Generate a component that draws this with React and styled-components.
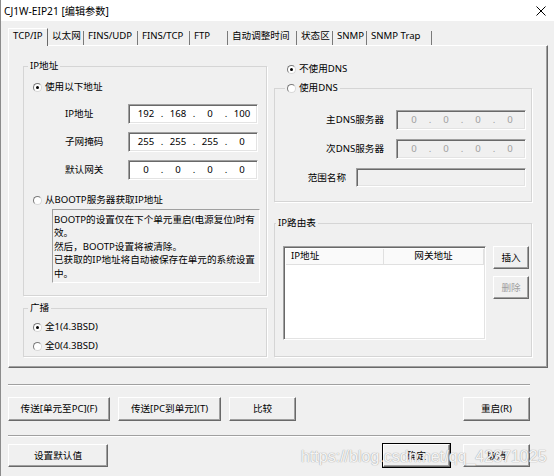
import React from 'react'
import styled, { createGlobalStyle, css } from 'styled-components'

const GlobalStyle = createGlobalStyle`
  html, body {
    margin: 0;
    padding: 0;
    background: #f0f0f0;
  }
  body {
    font-family: "Noto Sans", "Noto Sans CJK SC", sans-serif;
    font-size: 9.6px;
    line-height: 14px;
    color: #000;
  }
`

const sunken = css`
  box-sizing: border-box;
  border: 1px solid;
  border-color: #a0a0a0 #fff #fff #a0a0a0;
  box-shadow: inset 1px 1px 0 #696969, inset -1px -1px 0 #e3e3e3;
`

const Window = styled.div`
  position: relative;
  width: 554px;
  height: 476px;
  box-sizing: border-box;
  border-left: 1px solid #8c8c8c;
  background: #f0f0f0;
  overflow: hidden;
`

const TitleBar = styled.div`
  height: 21px;
  background: #fff;
  display: flex;
  align-items: center;
  justify-content: space-between;
  padding: 0 8px 0 3px;
  font-size: 10.2px;
`

const Body = styled.div`
  padding: 7px 6px 0 7px;
`

const TabStrip = styled.div`
  display: flex;
  align-items: flex-start;
  height: 17px;
  position: relative;
  z-index: 2;
`

const Tab = styled.div`
  box-sizing: border-box;
  width: ${p => p.$w}px;
  height: 17px;
  padding: 1px 0 0 4px;
  white-space: nowrap;
  ${p => p.$active ? css`
    height: 18px;
    padding-top: 0;
    background: #f0f0f0;
    border-top: 1px solid #fff;
    border-left: 1px solid #fff;
    border-right: 1px solid #696969;
  ` : css`
    background: linear-gradient(#7a7a7a, #7a7a7a) right bottom / 1px 14px no-repeat;
  `}
`

const Panel = styled.div`
  box-sizing: border-box;
  width: 540px;
  height: 323px;
  border: 1px solid;
  border-color: #fff #696969 #696969 #fff;
  box-shadow: inset -1px -1px 0 #a0a0a0;
  padding: 13px 14px 0 14px;
  display: grid;
  grid-template-columns: 244px 258px;
  column-gap: 7px;
  align-items: start;
`

const Column = styled.div`
  display: flex;
  flex-direction: column;
  padding-top: ${p => p.$top || 0}px;
`

const Group = styled.fieldset`
  box-sizing: border-box;
  margin: ${p => p.$mt || 0}px 0 0 0;
  padding: 0;
  min-width: 0;
  height: ${p => p.$h}px;
  border: 1px solid #d5d5d5;
  box-shadow: 1px 1px 0 #fff;
`

const Legend = styled.legend`
  margin-left: ${p => p.$ml}px;
  padding: 0 2px;
  line-height: 14px;
  display: flex;
  align-items: center;
  gap: 3px;
`

const GroupBody = styled.div`
  padding: ${p => p.$pad};
  display: flex;
  flex-direction: ${p => p.$row ? 'row' : 'column'};
  gap: ${p => p.$gap || 0}px;
`

const RadioRow = styled.div`
  display: flex;
  align-items: center;
  gap: 3px;
  height: 14px;
  margin: ${p => p.$m || '0'};
`

const RadioDot = styled.span`
  box-sizing: border-box;
  width: 9px;
  height: 9px;
  border-radius: 50%;
  border: 1px solid;
  border-color: #7a7a7a #d8d8d8 #d8d8d8 #7a7a7a;
  background: #fff;
  display: inline-flex;
  align-items: center;
  justify-content: center;
  flex: none;

  &::after {
    content: '';
    width: 3px;
    height: 3px;
    border-radius: 50%;
    background: #000;
    display: ${p => p.$checked ? 'block' : 'none'};
  }
`

const AddrList = styled.div`
  display: flex;
  flex-direction: column;
  gap: 8px;
  margin-top: 10px;
`

const AddrRow = styled.div`
  display: flex;
  align-items: center;
`

const AddrLabel = styled.span`
  width: 63px;
  margin-left: 32px;
`

const IpBox = styled.div`
  ${sunken};
  width: ${p => p.$w || 130}px;
  height: ${p => p.$h || 20}px;
  display: flex;
  align-items: center;
  padding-left: 3px;
  background: ${p => p.$disabled ? '#f0f0f0' : '#fff'};
  color: ${p => p.$disabled ? '#a0a0a0' : '#000'};
`

const Octet = styled.span`
  width: 28px;
  text-align: center;
`

const Dot = styled.span`
  width: 4px;
  text-align: center;
`

const NoteBox = styled.div`
  box-sizing: border-box;
  border: 1px solid;
  border-color: #a0a0a0 #fff #fff #a0a0a0;
  width: 208px;
  height: 74px;
  margin: 2px 0 0 19px;
  padding: 3px 0 0 1px;
  line-height: 13.4px;
  white-space: nowrap;
`

const DnsRow = styled.div`
  display: flex;
  align-items: center;
  justify-content: flex-end;
  gap: ${p => p.$gap}px;
`

const ListView = styled.div`
  ${sunken};
  width: 203px;
  height: 94px;
  padding: 2px 1px 1px 2px;
  background: #fff;
`

const ListHeader = styled.div`
  display: flex;
  height: 15px;
  line-height: 14px;
  background: #fafafa;
  border-bottom: 1px solid #e0e0e0;
`

const HeaderCell = styled.div`
  box-sizing: border-box;
  width: ${p => p.$w ? `${p.$w}px` : 'auto'};
  flex: ${p => p.$w ? 'none' : '1'};
  padding-left: ${p => p.$center ? 0 : 5}px;
  text-align: ${p => p.$center ? 'center' : 'left'};
  border-right: 1px solid #e0e0e0;
`

const SideButtons = styled.div`
  display: flex;
  flex-direction: column;
  gap: 7px;
`

const Button = styled.button`
  box-sizing: border-box;
  width: ${p => p.$w}px;
  height: ${p => p.$h || 24}px;
  margin: ${p => p.$m || '0'};
  padding: 0;
  font: inherit;
  color: ${p => p.disabled ? '#a0a0a0' : '#000'};
  background: #f0f0f0;
  border: 1px solid;
  border-color: #fff #696969 #696969 #fff;
  box-shadow: inset -1px -1px 0 #a0a0a0;
  white-space: nowrap;
  ${p => p.$default && css`
    outline: 1px solid #000;
  `}
`

const Separator = styled.div`
  width: 522px;
  height: 0;
  margin-top: ${p => p.$mt}px;
  border-top: 1px solid #a0a0a0;
  border-bottom: 1px solid #fff;
`

const ButtonRow = styled.div`
  display: flex;
  width: 522px;
  gap: 8px;
  margin-top: ${p => p.$mt}px;
`

const Watermark = styled.div`
  position: absolute;
  left: 300px;
  top: 448px;
  font-family: "Liberation Sans", Arial, sans-serif;
  font-size: 16px;
  line-height: 18px;
  color: rgba(255, 255, 255, 0.9);
  text-shadow: 0 0 1px #a8a8a8, 0 0 1px #a8a8a8;
  white-space: nowrap;
  pointer-events: none;
`

const tabs = [
  { label: 'TCP/IP', w: 40, active: true },
  { label: '以太网', w: 36 },
  { label: 'FINS/UDP', w: 54 },
  { label: 'FINS/TCP', w: 52 },
  { label: 'FTP', w: 38 },
  { label: '自动调整时间', w: 69 },
  { label: '状态区', w: 36 },
  { label: 'SNMP', w: 34 },
  { label: 'SNMP Trap', w: 65 },
]

function Radio({ checked, children, m }) {
  return (
    <RadioRow $m={m}>
      <RadioDot $checked={checked} />
      <span>{children}</span>
    </RadioRow>
  )
}

function IpField({ value, disabled }) {
  const parts = value.split('.')
  return (
    <IpBox $disabled={disabled}>
      {parts.map((p, i) => (
        <React.Fragment key={i}>
          <Octet>{p}</Octet>
          {i < 3 && <Dot>.</Dot>}
        </React.Fragment>
      ))}
    </IpBox>
  )
}

function CloseIcon() {
  return (
    <svg width="10" height="10" viewBox="0 0 10 10">
      <path d="M0.5 0.5 L9.5 9.5 M9.5 0.5 L0.5 9.5" stroke="#000" strokeWidth="1" />
    </svg>
  )
}

export default function App() {
  return (
    <Window>
      <GlobalStyle />
      <TitleBar>
        <span>CJ1W-EIP21 [编辑参数]</span>
        <CloseIcon />
      </TitleBar>
      <Body>
        <TabStrip>
          {tabs.map(t => (
            <Tab key={t.label} $w={t.w} $active={t.active}>{t.label}</Tab>
          ))}
        </TabStrip>
        <Panel>
          <Column>
            <Group $h={237}>
              <Legend $ml={4}>IP地址</Legend>
              <GroupBody $pad="7px 0 0 9px">
                <Radio checked>使用以下地址</Radio>
                <AddrList>
                  <AddrRow>
                    <AddrLabel>IP地址</AddrLabel>
                    <IpField value="192.168.0.100" />
                  </AddrRow>
                  <AddrRow>
                    <AddrLabel>子网掩码</AddrLabel>
                    <IpField value="255.255.255.0" />
                  </AddrRow>
                  <AddrRow>
                    <AddrLabel>默认网关</AddrLabel>
                    <IpField value="0.0.0.0" />
                  </AddrRow>
                </AddrList>
                <Radio m="13px 0 0 0">从BOOTP服务器获取IP地址</Radio>
                <NoteBox>
                  BOOTP的设置仅在下个单元重启(电源复位)时有<br />
                  效。<br />
                  然后，BOOTP设置将被清除。<br />
                  已获取的IP地址将自动被保存在单元的系统设置<br />
                  中。
                </NoteBox>
              </GroupBody>
            </Group>
            <Group $h={56} $mt={5}>
              <Legend $ml={4}>广播</Legend>
              <GroupBody $pad="5px 0 0 9px" $gap={5}>
                <Radio checked>全1(4.3BSD)</Radio>
                <Radio>全0(4.3BSD)</Radio>
              </GroupBody>
            </Group>
          </Column>

          <Column $top={3}>
            <Radio checked m="0 0 0 13px">不使用DNS</Radio>
            <Group $h={121} $mt={5}>
              <Legend $ml={10}>
                <RadioDot />
                <span>使用DNS</span>
              </Legend>
              <GroupBody $pad="15px 5px 0 0" $gap={9}>
                <DnsRow $gap={12}>
                  <span>主DNS服务器</span>
                  <IpField value="0.0.0.0" disabled />
                </DnsRow>
                <DnsRow $gap={12}>
                  <span>次DNS服务器</span>
                  <IpField value="0.0.0.0" disabled />
                </DnsRow>
                <DnsRow $gap={10}>
                  <span>范围名称</span>
                  <IpBox $w={170} $h={19} $disabled />
                </DnsRow>
              </GroupBody>
            </Group>
            <Group $h={141} $mt={14}>
              <Legend $ml={1}>IP路由表</Legend>
              <GroupBody $pad="16px 0 0 8px" $gap={7} $row>
                <ListView>
                  <ListHeader>
                    <HeaderCell $w={98}>IP地址</HeaderCell>
                    <HeaderCell $center>网关地址</HeaderCell>
                  </ListHeader>
                </ListView>
                <SideButtons>
                  <Button $w={36} $h={23}>插入</Button>
                  <Button $w={36} $h={23} disabled>删除</Button>
                </SideButtons>
              </GroupBody>
            </Group>
          </Column>
        </Panel>

        <Separator $mt={16} />
        <ButtonRow $mt={11}>
          <Button $w={102}>传送[单元至PC](F)</Button>
          <Button $w={103}>传送[PC到单元](T)</Button>
          <Button $w={67}>比较</Button>
          <Button $w={67} $m="0 0 0 auto">重启(R)</Button>
        </ButtonRow>
        <Separator $mt={14} />
        <ButtonRow $mt={7}>
          <Button $w={100} $h={23}>设置默认值</Button>
          <Button $w={67} $h={23} $default $m="0 5px 0 auto">确定</Button>
          <Button $w={67} $h={23}>取消</Button>
        </ButtonRow>
      </Body>
      <Watermark>https://blog.csdn.net/qq_42371025</Watermark>
    </Window>
  )
}
